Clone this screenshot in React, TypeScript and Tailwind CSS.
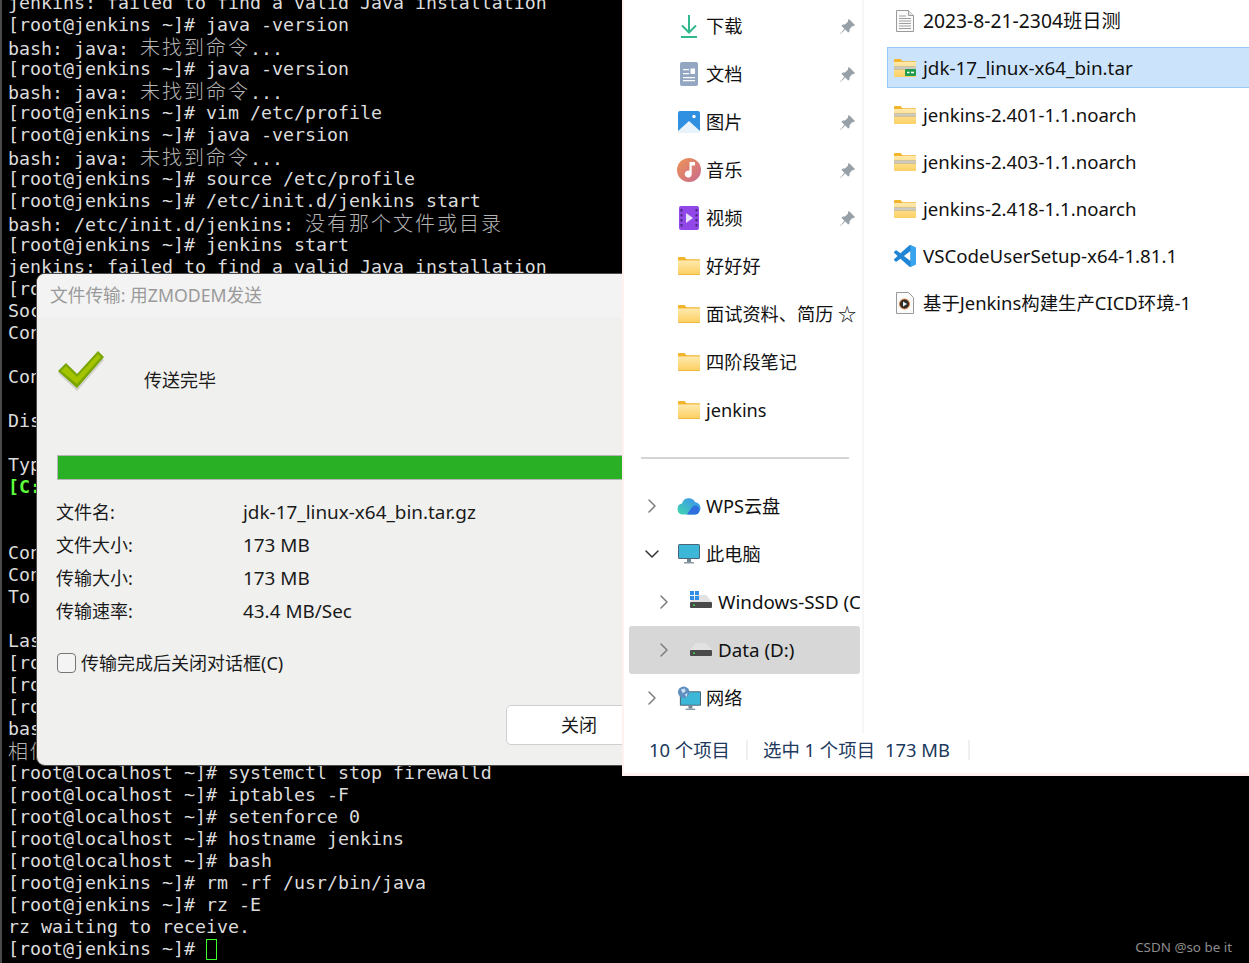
import * as React from "react";
import { ChevronDown, ChevronRight } from "lucide-react";

// ─── Terminal ─────────────────────────────────────────────────────────────────

type Line = { text?: string; zh?: string; tail?: string; green?: boolean; cursor?: boolean };

const JAVA_ERR: Line = { text: "bash: java: ", zh: "未找到命令", tail: "..." };

const LINES: Line[] = [
  { text: "jenkins: failed to find a valid Java installation" },
  { text: "[root@jenkins ~]# java -version" },
  JAVA_ERR,
  { text: "[root@jenkins ~]# java -version" },
  JAVA_ERR,
  { text: "[root@jenkins ~]# vim /etc/profile" },
  { text: "[root@jenkins ~]# java -version" },
  JAVA_ERR,
  { text: "[root@jenkins ~]# source /etc/profile" },
  { text: "[root@jenkins ~]# /etc/init.d/jenkins start" },
  { text: "bash: /etc/init.d/jenkins: ", zh: "没有那个文件或目录" },
  { text: "[root@jenkins ~]# jenkins start" },
  { text: "jenkins: failed to find a valid Java installation" },
  { text: "[ro" },
  { text: "Soc" },
  { text: "Con" },
  {},
  { text: "Con" },
  {},
  { text: "Dis" },
  {},
  { text: "Typ" },
  { text: "[C:", green: true },
  {},
  {},
  { text: "Con" },
  { text: "Con" },
  { text: "To" },
  {},
  { text: "Las" },
  { text: "[ro" },
  { text: "[ro" },
  { text: "[ro" },
  { text: "bas" },
  { zh: "相似" },
  { text: "[root@localhost ~]# systemctl stop firewalld" },
  { text: "[root@localhost ~]# iptables -F" },
  { text: "[root@localhost ~]# setenforce 0" },
  { text: "[root@localhost ~]# hostname jenkins" },
  { text: "[root@localhost ~]# bash" },
  { text: "[root@jenkins ~]# rm -rf /usr/bin/java" },
  { text: "[root@jenkins ~]# rz -E" },
  { text: "rz waiting to receive." },
  { text: "[root@jenkins ~]# ", cursor: true },
];

function Terminal() {
  return (
    <div className="h-[963px] overflow-hidden border-l-2 border-[#4a4a4a] bg-black pl-[6px] font-['DejaVu_Sans_Mono','Liberation_Mono',monospace] text-[18.27px] leading-[22px] text-[#dcdcdc]">
      <div className="-mt-[8px]">
        {LINES.map((l, i) => (
          <div key={i} className={`h-[22px] whitespace-pre ${l.green ? "font-bold text-[#5cff3a]" : ""}`}>
            {l.text}
            {l.zh && (
              <span className="inline-block h-[22px] font-['Noto_Sans_CJK_SC',sans-serif] text-[20px] font-light leading-[22px] tracking-[2px] text-[#b4b4b4]">
                {l.zh}
              </span>
            )}
            {l.tail}
            {l.cursor && <span className="inline-block h-[21px] w-[11px] border border-[#3dff2e] align-[-5px]" />}
          </div>
        ))}
      </div>
    </div>
  );
}

// ─── Transfer dialog ──────────────────────────────────────────────────────────

const INFO = [
  ["文件名:", "jdk-17_linux-x64_bin.tar.gz"],
  ["文件大小:", "173 MB"],
  ["传输大小:", "173 MB"],
  ["传输速率:", "43.4 MB/Sec"],
];

function CheckMark() {
  return (
    <svg width="50" height="42" viewBox="0 0 50 42" className="shrink-0">
      <polygon points="1,22 12,15 22,24 41,3 47,9 20,40" fill="#b9b9b2" opacity="0.6" />
      <polygon points="1,20 9,12 20,23 41,0 47,6 20,37" fill="#78a500" />
      <polygon points="4,20 9,15 20,26 41,3 44,6 20,33" fill="#a4c400" />
    </svg>
  );
}

function TransferDialog() {
  return (
    <div className="absolute left-[36px] top-[273px] h-[493px] w-[700px] overflow-hidden rounded-[9px] border border-[#4c4c4c] bg-[#f0f0ef] font-['Noto_Sans','Noto_Sans_CJK_SC',sans-serif] text-[18px] text-[#1a1a1a]">
      <div className="flex h-[43px] items-center bg-[#f3f3f3] pl-[13px] text-[17.7px] text-[#9a9a9a]">
        文件传输: 用ZMODEM发送
      </div>
      <div className="flex flex-col pl-[20px]">
        <div className="flex h-[138px] items-start pt-[34px]">
          <CheckMark />
          <span className="ml-[37px] mt-[15px] leading-[28px]">传送完毕</span>
        </div>
        <div className="h-[25px] border border-[#b5b5b5] bg-[#2ab024]" />
      </div>
      <div className="flex flex-col pl-[19px] pt-[16px]">
        {INFO.map(([label, value]) => (
          <div key={label} className="flex h-[33px] items-center">
            <span className="w-[187px]">{label}</span>
            <span className="text-[18.9px]">{value}</span>
          </div>
        ))}
      </div>
      <div className="mt-[21px] flex h-[28px] items-center pl-[20px]">
        <span className="h-[20px] w-[19px] rounded-[4px] border border-[#767676] bg-[#f4f4f4]" />
        <span className="ml-[5px]">传输完成后关闭对话框(C)</span>
      </div>
      <div className="mt-[28px] pl-[469px]">
        <div className="flex h-[40px] w-[146px] items-center justify-center rounded-[5px] border border-[#cfcfcf] bg-white">
          关闭
        </div>
      </div>
    </div>
  );
}

// ─── Explorer icons ───────────────────────────────────────────────────────────

function Pin() {
  return (
    <svg width="15" height="15" viewBox="0 0 15 15" fill="#98a0a8" className="block">
      <path d="M9 0L15 6L13.600 7.200L12.600 6.900L9.600 10L9.600 12.300L8.200 13.500L5.300 10.600L.3 15L0 14.700L4.400 9.700L1.500 6.800L2.800 5.400L5 5.400L8.100 2.400L7.800 1.200Z" />
    </svg>
  );
}

function Download() {
  return (
    <svg width="24" height="24" viewBox="0 0 24 24" fill="none" stroke="#32b88e" strokeWidth="2">
      <path d="M12 1v17M5 11.500l7 7 7-7" />
      <path d="M4 23h16" />
    </svg>
  );
}

function Docs() {
  return (
    <svg width="24" height="24" viewBox="0 0 24 24">
      <rect x="3" y="0" width="18" height="24" rx="2" fill="#93a6c2" />
      <path d="M6 7h6v1.200H6zM6 11h6v1.200H6zM6 15h12v1.200H6zM6 18h12v1.200H6z" fill="#fff" />
      <rect x="13.500" y="6.500" width="4.500" height="5.500" fill="#fff" />
    </svg>
  );
}

function Pictures() {
  return (
    <svg width="24" height="24" viewBox="0 0 24 24">
      <rect x="1" y="1" width="22" height="22" rx="2" fill="#2f8fe0" />
      <path d="M1 21l11-10 11 10v2H1z" fill="#e8f3fb" />
      <circle cx="17" cy="6.500" r="1.700" fill="#fff" />
    </svg>
  );
}

function Music() {
  return (
    <svg width="24" height="24" viewBox="0 0 24 24">
      <defs>
        <linearGradient id="music" x1="0" y1="0" x2="1" y2="1">
          <stop offset="0" stopColor="#ed9455" />
          <stop offset="1" stopColor="#c96a8e" />
        </linearGradient>
      </defs>
      <circle cx="12" cy="12" r="12" fill="url(#music)" />
      <path d="M12.500 4h5.500v3.500h-3.300v8.500a3.500 3.500 0 1 1-2.200-3.200z" fill="#fff" />
    </svg>
  );
}

function Video() {
  return (
    <svg width="24" height="24" viewBox="0 0 24 24">
      <rect x="2" y="0" width="20" height="24" rx="2" fill="#9248e8" />
      <path d="M3.500 3h2v2.400h-2zM3.500 8h2v2.400h-2zM3.500 13h2v2.400h-2zM3.500 18h2v2.400h-2zM18.500 3h2v2.400h-2zM18.500 8h2v2.400h-2zM18.500 13h2v2.400h-2zM18.500 18h2v2.400h-2z" fill="#4a2a80" />
      <path d="M9 7l7 5-7 5z" fill="#e9e2fb" />
    </svg>
  );
}

function FolderGradient() {
  return (
    <defs>
      <linearGradient id="folder" x1="0" y1="0" x2="0" y2="1">
        <stop offset="0" stopColor="#ffe9ae" />
        <stop offset="1" stopColor="#fcd064" />
      </linearGradient>
    </defs>
  );
}

function Folder() {
  return (
    <svg width="22" height="18" viewBox="0 0 22 18">
      <FolderGradient />
      <path d="M0 1.200C0 .5.5 0 1.200 0h5.300l2 2.200H21c.6 0 1 .4 1 1V4H0z" fill="#f3b52c" />
      <path d="M0 3h22v14c0 .6-.4 1-1 1H1c-.6 0-1-.4-1-1z" fill="#efb83e" />
      <path d="M0 3.500h22v13.500H0z" fill="url(#folder)" />
    </svg>
  );
}

function ZipFolder({ badge }: { badge?: boolean }) {
  return (
    <svg width="22" height="18" viewBox="0 0 22 18">
      <FolderGradient />
      <path d="M0 1.200C0 .5.5 0 1.200 0h5.300l2 2.200H21c.6 0 1 .4 1 1V4H0z" fill="#f3b52c" />
      <path d="M0 3h22v14c0 .6-.4 1-1 1H1c-.6 0-1-.4-1-1z" fill="url(#folder)" />
      <rect x="0" y="7.500" width="22" height="3" fill="#a8a596" />
      <rect x="0" y="8.500" width="22" height="1" fill="#eeeeee" />
      {badge && <rect x="11" y="10" width="11" height="7" rx="1" fill="#1f9d4d" />}
      {badge && <path d="M13 13.500h2.500M17 13.500h3" stroke="#fff" strokeWidth="1.400" />}
    </svg>
  );
}

function WpsCloud() {
  return (
    <svg width="24" height="18" viewBox="0 0 24 18">
      <defs>
        <linearGradient id="wps" x1="0" y1="1" x2="1" y2="0">
          <stop offset="0" stopColor="#42d6b0" />
          <stop offset="1" stopColor="#3a8ef0" />
        </linearGradient>
      </defs>
      <path d="M6 17.500a5.500 5.500 0 0 1-1-10.900A7 7 0 0 1 18 5a6.300 6.300 0 0 1 0 12.500z" fill="url(#wps)" />
      <path d="M10 17.500l5-7.500a4 4 0 0 1 3-1.500 4.500 4.500 0 0 1 0 9z" fill="#2f6fe0" />
    </svg>
  );
}

function Monitor() {
  return (
    <svg width="22" height="20" viewBox="0 0 22 20">
      <rect x="0" y="0" width="22" height="15" rx="1.500" fill="#4b6678" />
      <rect x="1" y="1" width="20" height="13" fill="#3db7d8" />
      <rect x="9" y="15" width="4" height="3" fill="#708592" />
      <rect x="6" y="18" width="10" height="1.500" fill="#8a9aa5" />
    </svg>
  );
}

function Drive({ windows }: { windows?: boolean }) {
  return (
    <svg width="22" height="22" viewBox="0 0 22 22">
      <path d="M6 4h10l6 7H0z" fill="#e2e2e2" />
      <rect x="0" y="11" width="22" height="6" rx="1" fill="#4a4a4a" />
      <rect x="3" y="13.500" width="2" height="1.500" fill="#39d353" />
      {windows && <path d="M0 0h4v4H0zM5 0h4v4H5zM0 5h4v4H0zM5 5h4v4H5z" fill="#2f8fe8" />}
    </svg>
  );
}

function Network() {
  return (
    <svg width="25" height="25" viewBox="0 0 25 25">
      <rect x="3" y="5" width="22" height="15" rx="1" fill="#4b6678" />
      <rect x="4" y="6" width="20" height="13" fill="#3db7d8" />
      <rect x="12" y="20" width="4" height="3" fill="#708592" />
      <rect x="9" y="23" width="10" height="1.500" fill="#8a9aa5" />
      <circle cx="7" cy="6" r="6" fill="#5f8fc0" />
      <path d="M4 3l4-1 1 3-3 2zM8 8l3-1-1 4z" fill="#cfe2f2" />
    </svg>
  );
}

function PlainDoc() {
  return (
    <svg width="18" height="22" viewBox="0 0 18 22">
      <path d="M.5.5h12l5 5v16H.5z" fill="#fafafa" stroke="#9a9a9a" />
      <path d="M12.500.5v5h5" fill="#e4e4e4" stroke="#9a9a9a" />
      <path d="M3 6h7M3 8.500h12M3 11h12M3 13.500h12M3 16h12M3 18.500h12" stroke="#9e9e9e" />
    </svg>
  );
}

function MediaDoc() {
  return (
    <svg width="18" height="22" viewBox="0 0 18 22">
      <path d="M.5.5h12l5 5v16H.5z" fill="#fbfbfb" stroke="#9a9a9a" />
      <circle cx="8.500" cy="12" r="5" fill="#2d2d2d" />
      <circle cx="8.500" cy="12" r="5" fill="none" stroke="#e8823a" strokeWidth="1" />
      <path d="M7 9.500l4 2.500-4 2.500z" fill="#fff" />
    </svg>
  );
}

function VSCode() {
  return (
    <svg width="24" height="24" viewBox="0 0 24 24">
      <path
        d="M23.150 2.587L18.210.21a1.494 1.494 0 0 0-1.705.29l-9.460 8.630-4.120-3.128a.999.999 0 0 0-1.276.057L.327 7.261A1 1 0 0 0 .326 8.740L3.899 12 .326 15.260a1 1 0 0 0 .001 1.479L1.650 17.940a.999.999 0 0 0 1.276.057l4.120-3.128 9.460 8.630a1.492 1.492 0 0 0 1.704.29l4.942-2.377A1.500 1.500 0 0 0 24 20.060V3.939a1.500 1.500 0 0 0-.85-1.352zm-5.146 14.861L10.826 12l7.178-5.448v10.896z"
        fill="#2185d5"
      />
      <path d="M18 .1l5.150 2.487A1.500 1.500 0 0 1 24 3.940v16.120a1.500 1.500 0 0 1-.85 1.353L18 23.900z" fill="#3aa5ee" />
    </svg>
  );
}

// ─── Explorer ─────────────────────────────────────────────────────────────────

const PINNED: [string, React.ReactNode][] = [
  ["下载", <Download />],
  ["文档", <Docs />],
  ["图片", <Pictures />],
  ["音乐", <Music />],
  ["视频", <Video />],
];

const FOLDERS = ["好好好", "面试资料、简历 ☆", "四阶段笔记", "jenkins"];

const FILES: { name: string; icon: React.ReactNode; size: string; selected?: boolean }[] = [
  { name: "2023-8-21-2304班日测", icon: <PlainDoc />, size: "mt-[2px] text-[19.3px]" },
  { name: "jdk-17_linux-x64_bin.tar", icon: <ZipFolder badge />, size: "mt-[2px] text-[18.85px]", selected: true },
  { name: "jenkins-2.401-1.1.noarch", icon: <ZipFolder />, size: "text-[18.6px]" },
  { name: "jenkins-2.403-1.1.noarch", icon: <ZipFolder />, size: "text-[18.6px]" },
  { name: "jenkins-2.418-1.1.noarch", icon: <ZipFolder />, size: "text-[18.6px]" },
  { name: "VSCodeUserSetup-x64-1.81.1", icon: <VSCode />, size: "mt-[2px] text-[18.7px]" },
  { name: "基于Jenkins构建生产CICD环境-1", icon: <MediaDoc />, size: "text-[18.4px]" },
];

function NavRow({
  icon,
  label,
  pinned,
  chevron,
  indent,
  active,
}: {
  icon: React.ReactNode;
  label: string;
  pinned?: boolean;
  chevron?: "right" | "down";
  indent?: boolean;
  active?: boolean;
}) {
  return (
    <div
      className={`flex h-12 items-center overflow-hidden rounded-[3px] ${indent ? "pl-[25px]" : "pl-[13px]"} ${
        active ? "bg-[#d7d7d7]" : ""
      }`}
    >
      <span className="flex w-[20px] shrink-0 justify-center">
        {chevron === "right" && <ChevronRight size={24} strokeWidth={1.5} className="shrink-0 text-[#7d7d7d]" />}
        {chevron === "down" && <ChevronDown size={24} strokeWidth={1.5} className="shrink-0 text-[#333]" />}
      </span>
      <span className="ml-[15px] flex w-[24px] shrink-0 justify-center">{icon}</span>
      <span className={`ml-[5px] whitespace-nowrap ${indent ? "text-[18.8px]" : "mt-[2px]"}`}>{label}</span>
      {pinned && (
        <span className="ml-auto pr-[5px]">
          <Pin />
        </span>
      )}
    </div>
  );
}

function Explorer() {
  return (
    <div className="absolute left-[622px] top-0 flex h-[776px] w-[627px] flex-col border-b-[3px] border-l-2 border-[#fff1ef] bg-white font-['Noto_Sans','Noto_Sans_CJK_SC',sans-serif] text-[18.2px] text-[#111]">
      <div className="flex h-[733px]">
        <div className="h-full w-[240px] shrink-0 border-r-2 border-[#f6f6f6] pl-[5px] pr-[2px] pt-[2px]">
          {PINNED.map(([label, icon]) => (
            <NavRow key={label} label={label} icon={icon} pinned />
          ))}
          {FOLDERS.map((label) => (
            <NavRow key={label} label={label} icon={<Folder />} />
          ))}
          <div className="flex h-12 items-center pl-[12px] pr-[11px]">
            <div className="h-[2px] w-full bg-[#d4d4d4]" />
          </div>
          <NavRow label="WPS云盘" icon={<WpsCloud />} chevron="right" />
          <NavRow label="此电脑" icon={<Monitor />} chevron="down" />
          <NavRow label="Windows-SSD (C:)" icon={<Drive windows />} chevron="right" indent />
          <NavRow label="Data (D:)" icon={<Drive />} chevron="right" indent active />
          <NavRow label="网络" icon={<Network />} chevron="right" />
        </div>
        <div className="flex flex-1 flex-col gap-[6px] pl-[23px]">
          {FILES.map((f) => (
            <div
              key={f.name}
              className={`flex h-[41px] items-center gap-[7px] border pl-[6px] ${
                f.selected ? "border-[#99c9f5] border-r-0 bg-[#cce4fb]" : "border-transparent"
              }`}
            >
              <span className="flex w-[22px] justify-center">{f.icon}</span>
              <span className={`whitespace-nowrap ${f.size}`}>{f.name}</span>
            </div>
          ))}
        </div>
      </div>
      <div className="flex flex-1 items-center pb-[7px] pl-[25px] text-[18.4px] text-[#20395c]">
        <span className="w-[97px]">10 个项目</span>
        <span className="h-[20px] w-[2px] bg-[#f0f0f0]" />
        <span className="ml-[15px] w-[122px]">选中 1 个项目</span>
        <span className="w-[83px]">173 MB</span>
        <span className="h-[20px] w-[2px] bg-[#f0f0f0]" />
      </div>
    </div>
  );
}

export default function App() {
  return (
    <div className="relative h-[963px] w-[1249px] overflow-hidden bg-black">
      <Terminal />
      <TransferDialog />
      <Explorer />
      <span className="absolute bottom-[6px] right-[17px] font-['Noto_Sans',sans-serif] text-[13.4px] text-[#8c8c8c]">
        CSDN @so be it
      </span>
    </div>
  );
}
